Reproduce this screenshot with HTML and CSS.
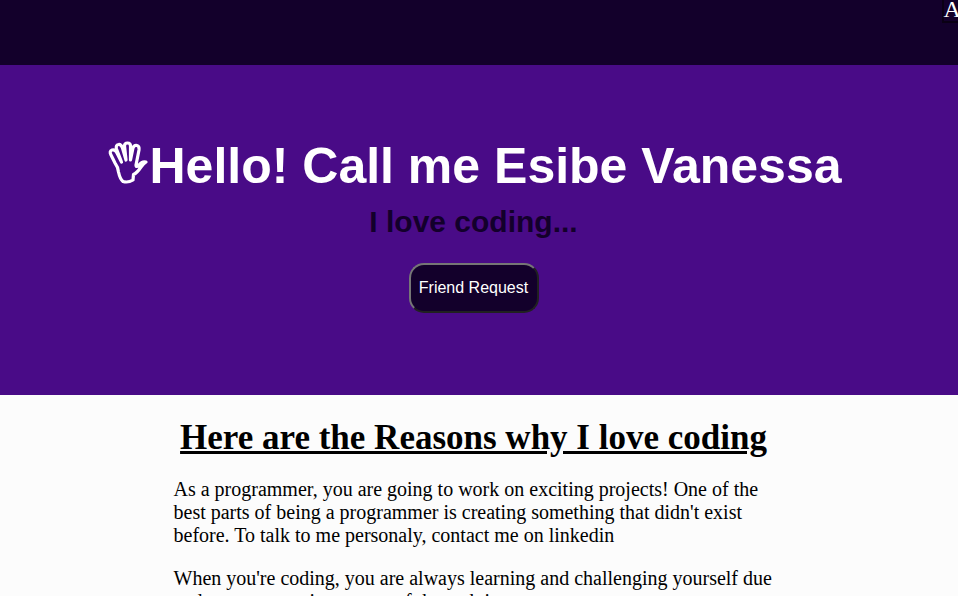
FILE: index.html
```html
<!DOCTYPE html>
<html lang="en">
<head>
<meta charset="utf-8">
<title>Esibe Vanessa</title>
<link rel="stylesheet" href="styles.css">
</head>
<body>
<nav class="nav"><a class="nav-link">About</a></nav>
<header class="hero">
<h1 class="title"><svg class="hand" viewBox="0 0 40 44" aria-hidden="true"><path d="M10.5 31 Q10 26 7 22 L3 14 Q1 10 4 9 Q7 8 9 12 L13.500 21 L8.500 8 Q7.500 4 10.500 3.500 Q13 3 14.500 7 L18 19 L16.500 5 Q16.500 2 19.500 2 Q22.500 2 22.500 5 L22.500 19 L25 7 Q26 4 29 4.500 Q31.500 5 31 9 L28 24 Q28 27 31 24 Q34 20 38 21 Q35 23 33 26 Q29 32 25.500 33.500 L25 39 Q20 42 15 40.500 Q12 38 10.500 31Z"/></svg>Hello! Call me Esibe Vanessa</h1>
<h2 class="tagline">I love coding...</h2>
<button class="request">Friend Request</button>
</header>
<main class="content">
<h2 class="heading">Here are the Reasons why I love coding</h2>
<p class="text">As a programmer, you are going to work on exciting projects! One of the best parts of being a programmer is creating something that didn't exist before. To talk to me personaly, contact me on linkedin</p>
<p class="text">When you're coding, you are always learning and challenging yourself due and as ever growing nature of the tech is</p>
</main>
</body>
</html>
```
FILE: styles.css
```css
html, body {
  height: 100%;
  overflow: hidden;
}
body {
  margin: 0;
  background: #fcfcfc;
  color: #000;
  font-family: "Liberation Serif", serif;
}
.nav {
  display: flex;
  box-sizing: border-box;
  height: 65px;
  padding-left: 942px;
  align-items: flex-start;
  background: #13002b;
  overflow: hidden;
}
.nav-link {
  flex: none;
  margin-top: -5px;
  border: 2px solid #0a0014;
  color: #fff;
  font-size: 24px;
  line-height: 24px;
  text-indent: -0.5px;
}
.hero {
  display: flex;
  flex-direction: column;
  align-items: center;
  box-sizing: border-box;
  height: 330px;
  padding: 72px 11px 0 0;
  background: #490b87;
  font-family: "Liberation Sans", sans-serif;
}
.title {
  display: flex;
  align-items: center;
  margin: 0 0 0 2px;
  color: #fff;
  font-size: 50px;
  line-height: 58px;
  white-space: nowrap;
}
.hand {
  width: 40px;
  height: 44px;
  margin: 0 2px 6px 0;
  fill: none;
  stroke: #fff;
  stroke-width: 3.2;
  stroke-linejoin: round;
}
.tagline {
  margin: 10px 0 0;
  color: #13002b;
  font-size: 30px;
  line-height: 34px;
}
.request {
  width: 130px;
  height: 50px;
  margin-top: 24px;
  padding: 0;
  border: 2px outset #767676;
  border-radius: 15px;
  background: #13002b;
  color: #fff;
  font: 16px "Liberation Sans", sans-serif;
}
.content {
  width: 600px;
  margin-left: 173.5px;
  padding-top: 23px;
}
.heading {
  margin: 0 0 20px;
  font-size: 35px;
  line-height: 40px;
  text-align: center;
  text-decoration: underline;
}
.text {
  margin: 0 0 20px;
  font-size: 20px;
  line-height: 23px;
}
```
